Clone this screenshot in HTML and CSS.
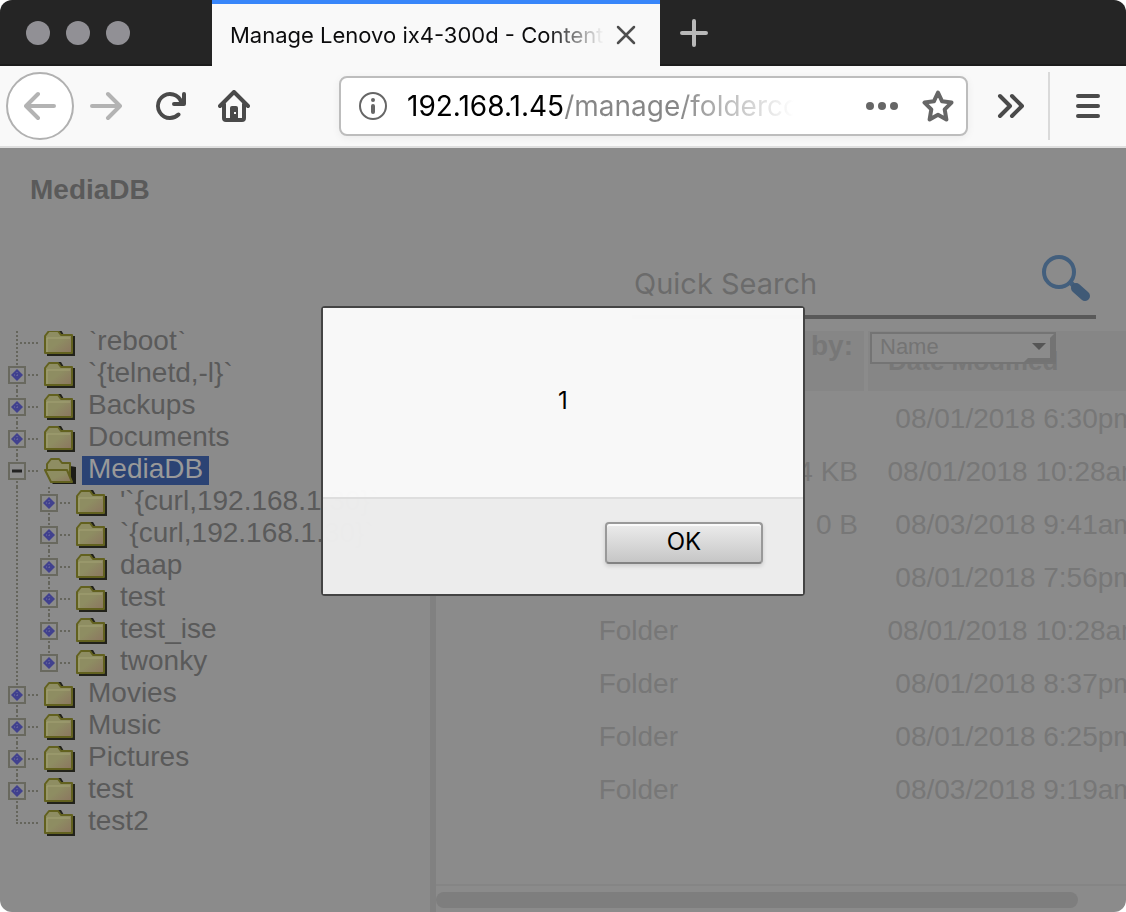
FILE: index.html
```html
<!DOCTYPE html>
<html lang="en">
<head>
  <meta charset="UTF-8">
  <title>Manage Lenovo ix4-300d - Content</title>
  <meta name="viewport" content="width=device-width, initial-scale=1.0">
  <link rel="stylesheet" href="styles.css">
</head>
<body>
  <svg class="sprite" aria-hidden="true">
    <!-- tree connectors -->
    <symbol id="line" viewBox="0 0 32 32"><path class="dots" d="M17 0v32"/></symbol>
    <symbol id="leaf" viewBox="0 0 38 32"><path class="dots" d="M17 0v32M20 16h18"/></symbol>
    <symbol id="end" viewBox="0 0 38 32"><path class="dots" d="M17 0v16M16 16h22"/></symbol>
    <symbol id="toggle" viewBox="0 0 38 32">
      <rect class="box" x="9" y="8" width="16" height="16"/>
      <path d="M17 10l6 6-6 6-6-6z" fill="#41418e"/>
      <path d="M14 16h6M17 13v6" stroke="#7272a0" stroke-width="1" stroke-dasharray="1 2"/>
    </symbol>
    <symbol id="plus" viewBox="0 0 38 32">
      <path class="dots" d="M17 0v7M17 26v6M28 16h10"/>
      <use href="#toggle" width="38" height="32"/>
    </symbol>
    <symbol id="pluslast" viewBox="0 0 38 32">
      <path class="dots" d="M17 0v7M28 16h10"/>
      <use href="#toggle" width="38" height="32"/>
    </symbol>
    <symbol id="minus" viewBox="0 0 38 32">
      <path class="dots" d="M17 0v7M17 26v6M28 16h10"/>
      <rect class="box" x="9" y="8" width="16" height="16"/>
      <path d="M12 16h10" stroke="#222" stroke-width="3"/>
    </symbol>
    <!-- folders -->
    <symbol id="folder" viewBox="0 0 32 32">
      <path d="M3 29h28V9h-3v17H3z" fill="#22221a"/>
      <path d="M14 3h3l3 5h-4z" fill="#22221a"/>
      <path d="M1 26V9l4-5h9l3 4h11v18z" fill="url(#paper)" stroke="#62611f" stroke-width="2" stroke-linejoin="round"/>
      <path d="M3 25V11h23" fill="none" stroke="#a3a274"/>
    </symbol>
    <symbol id="open" viewBox="0 0 32 32">
      <path d="M8 29h24V12l-6-1z" fill="#1c1c16"/>
      <path d="M3 15V9l4-5h8l3 4h8v15l-4-8z" fill="#8e8d62" stroke="#62611f" stroke-width="2" stroke-linejoin="round"/>
      <path d="M1 15h22l5 12H7z" fill="url(#paper)" stroke="#62611f" stroke-width="2" stroke-linejoin="round"/>
    </symbol>
    <linearGradient id="paper" x1="0" y1="0" x2="1" y2="1">
      <stop offset="0.500" stop-color="#8e8d62"/>
      <stop offset="1" stop-color="#8b7560"/>
    </linearGradient>
  </svg>

  <div class="window">
    <div class="tabbar">
      <div class="lights"><span></span><span></span><span></span></div>
      <div class="tab">
        <span class="tab-title">Manage Lenovo ix4-300d - Content</span>
        <button class="tab-close" aria-label="Close tab">
          <svg width="20" height="20" viewBox="0 0 20 20"><path d="M2 2l16 16M18 2L2 18" stroke="#4e4e4e" stroke-width="2.500" stroke-linecap="round"/></svg>
        </button>
      </div>
      <button class="tab-new" aria-label="New tab">
        <svg width="28" height="28" viewBox="0 0 28 28"><path d="M14 2v24M2 14h24" stroke="#b9b9b9" stroke-width="4" stroke-linecap="round"/></svg>
      </button>
    </div>

    <div class="toolbar">
      <button class="back" aria-label="Back">
        <svg class="icon" viewBox="0 0 32 32"><path d="M30 16H2M14 4L2 16l12 12"/></svg>
      </button>
      <button class="tool forward" aria-label="Forward">
        <svg class="icon" viewBox="0 0 32 32"><path d="M2 16h28M18 4l12 12-12 12"/></svg>
      </button>
      <button class="tool" aria-label="Reload">
        <svg class="icon solid" viewBox="0 0 16 16"><path d="M15 1a1 1 0 0 0-1 1v2.418A6.995 6.995 0 1 0 8 15a6.954 6.954 0 0 0 4.950-2.050 1 1 0 0 0-1.414-1.414A5.019 5.019 0 1 1 12.549 6H10a1 1 0 0 0 0 2h5a1 1 0 0 0 1-1V2a1 1 0 0 0-1-1z"/></svg>
      </button>
      <button class="tool" aria-label="Home">
        <svg class="icon" viewBox="0 0 32 32">
          <path d="M2 16L16 2l14 14M6 14v14q0 2 2 2h16q2 0 2-2V14"/>
          <rect x="12" y="16" width="8" height="14" rx="2" fill="#4a4a4a" stroke="none"/>
          <rect x="16" y="22" width="2" height="2" fill="#f9f9f9" stroke="none"/>
        </svg>
      </button>
      <div class="urlbar">
        <svg width="28" height="28" viewBox="0 0 28 28">
          <circle cx="14" cy="14" r="13" fill="none" stroke="#666" stroke-width="2"/>
          <circle cx="14" cy="8" r="2" fill="#666"/>
          <rect x="12" y="12" width="4" height="10" rx="2" fill="#666"/>
        </svg>
        <input class="url" type="text" aria-label="Address" value="192.168.1.45/manage/foldercontent">
        <button aria-label="Page actions">
          <svg width="32" height="32" viewBox="0 0 32 32" fill="#666"><circle cx="4" cy="16" r="4"/><circle cx="16" cy="16" r="4"/><circle cx="28" cy="16" r="4"/></svg>
        </button>
        <button aria-label="Bookmark">
          <svg width="32" height="32" viewBox="0 0 32 32"><path d="M16 2.500l4.100 8.800 9.400 1.300-6.800 6.700 1.700 10.200L16 24.800l-8.400 4.700 1.700-10.200-6.800-6.700 9.400-1.300z" fill="none" stroke="#666" stroke-width="4" stroke-linejoin="round"/></svg>
        </button>
      </div>
      <button class="tool" aria-label="More tools">
        <svg class="icon" viewBox="0 0 32 32"><path d="M5 6l10 10L5 26M17 6l10 10-10 10"/></svg>
      </button>
      <button class="menu" aria-label="Open menu">
        <svg class="icon" viewBox="0 0 32 32"><path d="M6 6h20M6 16h20M6 26h20"/></svg>
      </button>
    </div>

    <div class="page">
      <header class="header">
        <h1>MediaDB</h1>
        <div class="search">
          <input type="text" placeholder="Quick Search" aria-label="Quick Search">
          <button aria-label="Search">
            <svg width="50" height="48" viewBox="0 0 50 48">
              <circle cx="18" cy="18" r="15" fill="none" stroke="#435f7d" stroke-width="4"/>
              <path d="M29 28l5 5" stroke="#435f7d" stroke-width="5"/>
              <path d="M35 34l9 8" stroke="#405a76" stroke-width="10" stroke-linecap="round"/>
            </svg>
          </button>
        </div>
      </header>

      <div class="workspace">
        <nav class="sidebar">
          <ul class="tree">
            <li><svg class="conn"><use href="#leaf"/></svg><svg class="folder"><use href="#folder"/></svg><span>`reboot`</span></li>
            <li><svg class="conn"><use href="#plus"/></svg><svg class="folder"><use href="#folder"/></svg><span>`{telnetd,-l}`</span></li>
            <li><svg class="conn"><use href="#plus"/></svg><svg class="folder"><use href="#folder"/></svg><span>Backups</span></li>
            <li><svg class="conn"><use href="#plus"/></svg><svg class="folder"><use href="#folder"/></svg><span>Documents</span></li>
            <li><svg class="conn"><use href="#minus"/></svg><svg class="folder"><use href="#open"/></svg><span class="selected">MediaDB</span></li>
            <li><svg class="indent"><use href="#line"/></svg><svg class="conn"><use href="#plus"/></svg><svg class="folder"><use href="#folder"/></svg><span>'`{curl,192.168.1.30}`</span></li>
            <li><svg class="indent"><use href="#line"/></svg><svg class="conn"><use href="#plus"/></svg><svg class="folder"><use href="#folder"/></svg><span>`{curl,192.168.1.30}`</span></li>
            <li><svg class="indent"><use href="#line"/></svg><svg class="conn"><use href="#plus"/></svg><svg class="folder"><use href="#folder"/></svg><span>daap</span></li>
            <li><svg class="indent"><use href="#line"/></svg><svg class="conn"><use href="#plus"/></svg><svg class="folder"><use href="#folder"/></svg><span>test</span></li>
            <li><svg class="indent"><use href="#line"/></svg><svg class="conn"><use href="#plus"/></svg><svg class="folder"><use href="#folder"/></svg><span>test_ise</span></li>
            <li><svg class="indent"><use href="#line"/></svg><svg class="conn"><use href="#pluslast"/></svg><svg class="folder"><use href="#folder"/></svg><span>twonky</span></li>
            <li><svg class="conn"><use href="#plus"/></svg><svg class="folder"><use href="#folder"/></svg><span>Movies</span></li>
            <li><svg class="conn"><use href="#plus"/></svg><svg class="folder"><use href="#folder"/></svg><span>Music</span></li>
            <li><svg class="conn"><use href="#plus"/></svg><svg class="folder"><use href="#folder"/></svg><span>Pictures</span></li>
            <li><svg class="conn"><use href="#plus"/></svg><svg class="folder"><use href="#folder"/></svg><span>test</span></li>
            <li><svg class="conn"><use href="#end"/></svg><svg class="folder"><use href="#folder"/></svg><span>test2</span></li>
          </ul>
        </nav>

        <main class="files">
          <div class="sort">
            <label for="sort">Sort by:</label>
            <div class="select">
              <select id="sort"><option>Name</option></select>
              <svg width="32" height="28" viewBox="0 0 32 28">
                <path d="M0 28l4-4h22V4l4-4h2v28z" fill="#737373"/>
                <path d="M8 9h14l-7 7z" fill="#555"/>
              </svg>
            </div>
          </div>
          <table>
            <thead>
              <tr><th class="type">Type</th><th class="size">Size</th><th class="date">Date Modified</th></tr>
            </thead>
            <tbody>
              <tr><td>Folder</td><td></td><td>08/01/2018 6:30pm</td></tr>
              <tr><td>DS_Store File</td><td>4 KB</td><td>08/01/2018 10:28am</td></tr>
              <tr><td>File</td><td>0 B</td><td>08/03/2018 9:41am</td></tr>
              <tr><td>Folder</td><td></td><td>08/01/2018 7:56pm</td></tr>
              <tr><td>Folder</td><td></td><td>08/01/2018 10:28am</td></tr>
              <tr><td>Folder</td><td></td><td>08/01/2018 8:37pm</td></tr>
              <tr><td>Folder</td><td></td><td>08/01/2018 6:25pm</td></tr>
              <tr><td>Folder</td><td></td><td>08/03/2018 9:19am</td></tr>
            </tbody>
          </table>
          <div class="scrollbar"><div class="thumb"></div></div>
        </main>
      </div>

      <div class="overlay">
        <div class="dialog" role="alertdialog" aria-labelledby="message">
          <p id="message">1</p>
          <div class="actions"><button>OK</button></div>
        </div>
      </div>
    </div>
  </div>
</body>
</html>
```
FILE: styles.css
```css
* {
  box-sizing: border-box;
}

body {
  margin: 0;
  background: #fff;
  font-family: "Liberation Sans", Arial, sans-serif;
  font-size: 28px;
}

button {
  flex-shrink: 0;
  padding: 0;
  border: none;
  background: none;
  font-family: inherit;
  cursor: pointer;
}

button svg {
  display: block;
  margin: 0 auto;
}

.sprite {
  position: absolute;
  width: 0;
  height: 0;
}

.window {
  display: flex;
  flex-direction: column;
  min-height: 100vh;
  border-radius: 12px;
  overflow: hidden;
}

/* tab strip */
.tabbar {
  display: flex;
  align-items: center;
  height: 66px;
  background: linear-gradient(#252525 64px, #1c1c1c 64px);
}

.lights {
  display: flex;
  gap: 16px;
  width: 212px;
  padding-left: 26px;
}

.lights span {
  width: 24px;
  height: 24px;
  border-radius: 50%;
  background: #919095;
}

.tab {
  display: flex;
  align-items: center;
  width: 448px;
  height: 66px;
  padding: 0 24px 0 18px;
  border-top: 4px solid #3886fa;
  background: #f9f9f9;
}

.tab-title {
  flex: 1;
  overflow: hidden;
  white-space: nowrap;
  font-family: Inter, sans-serif;
  font-size: 22px;
  color: #0c0c0d;
  -webkit-mask-image: linear-gradient(to right, #000 85%, transparent);
  mask-image: linear-gradient(to right, #000 85%, transparent);
}

.tab-close {
  width: 20px;
  margin-left: 12px;
}

.tab-new {
  width: 68px;
}

/* navigation */
.toolbar {
  display: flex;
  align-items: center;
  height: 82px;
  padding-left: 6px;
  border-bottom: 2px solid #dfdfdf;
  background: #f9f9f9;
}

.icon {
  width: 32px;
  height: 32px;
  fill: none;
  stroke: #4a4a4a;
  stroke-width: 4;
  stroke-linecap: round;
  stroke-linejoin: round;
}

.icon.solid {
  fill: #4a4a4a;
  stroke: none;
}

.back {
  width: 68px;
  height: 68px;
  border: 2px solid #b1b1b1;
  border-radius: 50%;
  background: #fff;
}

.back .icon,
.forward .icon {
  stroke: #b3b3b3;
}

.tool {
  width: 64px;
  height: 64px;
}

.urlbar {
  display: flex;
  flex: 1;
  align-items: center;
  min-width: 0;
  height: 60px;
  margin: 0 11px 0 73px;
  padding: 0 12px 0 18px;
  border: 2px solid #bdbdbd;
  border-radius: 8px;
  background: #fff;
  box-shadow: 0 2px 8px rgba(0, 0, 0, 0.06);
}

.urlbar svg {
  flex-shrink: 0;
}

.url {
  flex: 1;
  min-width: 0;
  margin: 0 72px 0 20px;
  padding: 0;
  border: none;
  outline: none;
  font-family: Inter, sans-serif;
  font-size: 28px;
  /* host in black, path in grey, fading out at the end */
  color: transparent;
  background: linear-gradient(to right, #000 158px, #868686 158px, #868686 270px, transparent);
  -webkit-background-clip: text;
  background-clip: text;
}

.urlbar button + button {
  margin-left: 24px;
}

.menu {
  width: 78px;
  height: 68px;
  margin-left: 5px;
  border-left: 2px solid #dadada;
}

/* page */
.page {
  display: flex;
  flex: 1;
  flex-direction: column;
  position: relative;
  background: #8b8b8b;
  color: #5a5a5a;
}

.header {
  height: 183px;
  padding: 24px 30px 0;
}

.header h1 {
  margin: 0;
  font-size: 28px;
  line-height: 36px;
}

.search {
  display: flex;
  align-items: center;
  width: 464px;
  height: 72px;
  margin: 39px 0 0 auto;
  padding: 0 5px 6px 2px;
  border-bottom: 4px solid #595959;
}

.search input {
  flex: 1;
  min-width: 0;
  height: 52px;
  padding: 10px 0 0;
  border: none;
  outline: none;
  background: none;
  font-family: Inter, sans-serif;
  font-size: 29px;
}

.search input::placeholder {
  color: #6b6b6b;
}

.workspace {
  display: flex;
  flex: 1;
}

.sidebar {
  flex-shrink: 0;
  width: 436px;
  border-right: 6px solid #818181;
}

.tree {
  margin: 0;
  padding: 0;
  list-style: none;
}

.tree li {
  display: flex;
  align-items: center;
  height: 32px;
  white-space: nowrap;
}

.tree li:first-child {
  align-items: flex-end;
  height: 28px;
  overflow: hidden;
}

.tree span {
  height: 29px;
  margin: 0 0 2px 6px;
  padding: 0 6px;
  line-height: 26px;
}

.tree .selected {
  background: #2b4374;
  color: #999;
}

.conn {
  width: 38px;
  height: 32px;
}

.indent {
  width: 32px;
  height: 32px;
}

.folder {
  width: 32px;
  height: 32px;
  margin-left: 6px;
}

.dots {
  fill: none;
  stroke: #65655c;
  stroke-width: 2;
  stroke-dasharray: 2 2;
}

.box {
  fill: none;
  stroke: #69695f;
  stroke-width: 2;
}

/* file list */
.files {
  display: flex;
  flex: 1;
  flex-direction: column;
  min-width: 0;
  position: relative;
  overflow: hidden;
  color: #777;
}

.sort {
  display: flex;
  align-items: flex-start;
  gap: 17px;
  position: absolute;
  top: 0;
  right: 70px;
  line-height: 30px;
  font-weight: bold;
}

.select {
  position: relative;
  margin-top: 1px;
}

.select select {
  display: block;
  width: 186px;
  height: 32px;
  padding: 0 8px 4px;
  border: 2px solid #747474;
  border-radius: 0;
  background: #8b8b8b;
  color: #747474;
  font-family: inherit;
  font-size: 22px;
  appearance: none;
}

.select svg {
  position: absolute;
  top: 2px;
  right: 0;
  pointer-events: none;
}

table {
  width: 728px;
  table-layout: fixed;
  border-spacing: 0;
}

th {
  height: 60px;
  padding: 0 20px;
  border-right: 4px solid #8b8b8b;
  background: #868686;
  font-size: 26px;
  line-height: 56px;
  text-align: left;
}

th.type {
  width: 252px;
  padding-left: 34px;
}

th.size {
  width: 180px;
}

td {
  height: 53px;
  padding: 3px 10px 0;
  line-height: 32px;
  text-align: right;
  white-space: nowrap;
}

td:last-child {
  padding: 3px 0 0;
  text-align: center;
}

.scrollbar {
  height: 28px;
  margin-top: auto;
  padding: 6px 0;
  border-top: 2px solid #858585;
}

.thumb {
  width: 93%;
  height: 16px;
  border-radius: 8px;
  background: #7e7e7e;
}

/* alert */
.overlay {
  display: flex;
  align-items: flex-start;
  justify-content: center;
  position: absolute;
  inset: 0;
  padding-top: 158px;
}

.dialog {
  width: 484px;
  border: 2px solid #444;
  border-radius: 4px;
  font-family: Inter, sans-serif;
  font-size: 24px;
  color: #000;
}

.dialog p {
  display: flex;
  align-items: center;
  justify-content: center;
  height: 189px;
  margin: 0;
  padding-bottom: 4px;
  background: rgba(252, 252, 252, 0.97);
}

.actions {
  display: flex;
  justify-content: flex-end;
  height: 97px;
  padding: 23px 40px;
  border-top: 2px solid #dedede;
  background: rgba(239, 239, 239, 0.97);
}

.actions button {
  width: 158px;
  height: 42px;
  padding-bottom: 4px;
  border: 2px solid #999;
  border-bottom-color: #828282;
  border-radius: 4px;
  background: linear-gradient(#ececec, #c6c6c6);
  box-shadow: inset 0 2px 0 #fafafa, 0 2px 4px rgba(0, 0, 0, 0.15);
  font-size: 24px;
  color: #000;
}
```
